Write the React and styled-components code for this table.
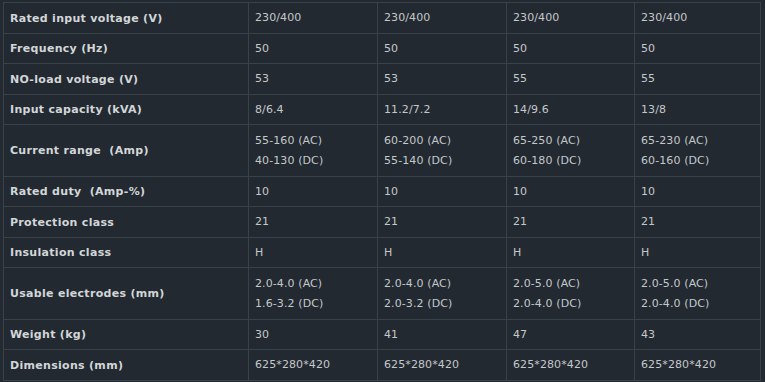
import React from 'react';
import styled, { createGlobalStyle } from 'styled-components';

const GlobalStyle = createGlobalStyle`
  html, body {
    margin: 0;
    padding: 0;
    background: #232a31;
  }
  body {
    padding: 2px 0 0 3px;
    font-family: "DejaVu Sans", Verdana, sans-serif;
  }
`;

const SpecTable = styled.table`
  border-collapse: collapse;
  table-layout: fixed;
  width: 757px;
  background: #222930;
  border: 1px solid #3a4249;

  td {
    border: 1px solid #3a4249;
    padding: 1px 6px 0;
    vertical-align: middle;
  }
`;

const Col = styled.col`
  width: ${(p) => p.$width}px;
`;

const Row = styled.tr`
  height: ${(p) => (p.$double ? '51.5px' : '30.5px')};
`;

const Label = styled.td`
  font-size: 11px;
  font-weight: bold;
  letter-spacing: 0.3px;
  color: #d3d6d9;
`;

const Value = styled.td`
  font-size: 11px;
  color: #c4c8cb;
  line-height: 20px;
  letter-spacing: 0.1px;
`;

const columnWidths = [245, 129, 129, 128, 126];

const specs = [
  ['Rated input voltage (V)', '230/400', '230/400', '230/400', '230/400'],
  ['Frequency (Hz)', '50', '50', '50', '50'],
  ['NO-load voltage (V)', '53', '53', '55', '55'],
  ['Input capacity (kVA)', '8/6.4', '11.2/7.2', '14/9.6', '13/8'],
  [
    'Current range\u00a0 (Amp)',
    ['55-160 (AC)', '40-130 (DC)'],
    ['60-200 (AC)', '55-140 (DC)'],
    ['65-250 (AC)', '60-180 (DC)'],
    ['65-230 (AC)', '60-160 (DC)'],
  ],
  ['Rated duty\u00a0 (Amp-%)', '10', '10', '10', '10'],
  ['Protection class', '21', '21', '21', '21'],
  ['Insulation class', 'H', 'H', 'H', 'H'],
  [
    'Usable electrodes (mm)',
    ['2.0-4.0 (AC)', '1.6-3.2 (DC)'],
    ['2.0-4.0 (AC)', '2.0-3.2 (DC)'],
    ['2.0-5.0 (AC)', '2.0-4.0 (DC)'],
    ['2.0-5.0 (AC)', '2.0-4.0 (DC)'],
  ],
  ['Weight (kg)', '30', '41', '47', '43'],
  ['Dimensions (mm)', '625*280*420', '625*280*420', '625*280*420', '625*280*420'],
];

function App() {
  return (
    <>
      <GlobalStyle />
      <SpecTable>
        <colgroup>
          {columnWidths.map((w, i) => (
            <Col key={i} $width={w} />
          ))}
        </colgroup>
        <tbody>
          {specs.map(([name, ...values]) => (
            <Row key={name} $double={Array.isArray(values[0])}>
              <Label>{name}</Label>
              {values.map((v, i) => (
                <Value key={i}>
                  {Array.isArray(v) ? (
                    <>
                      {v[0]}
                      <br />
                      {v[1]}
                    </>
                  ) : (
                    v
                  )}
                </Value>
              ))}
            </Row>
          ))}
        </tbody>
      </SpecTable>
    </>
  );
}

export default App;
